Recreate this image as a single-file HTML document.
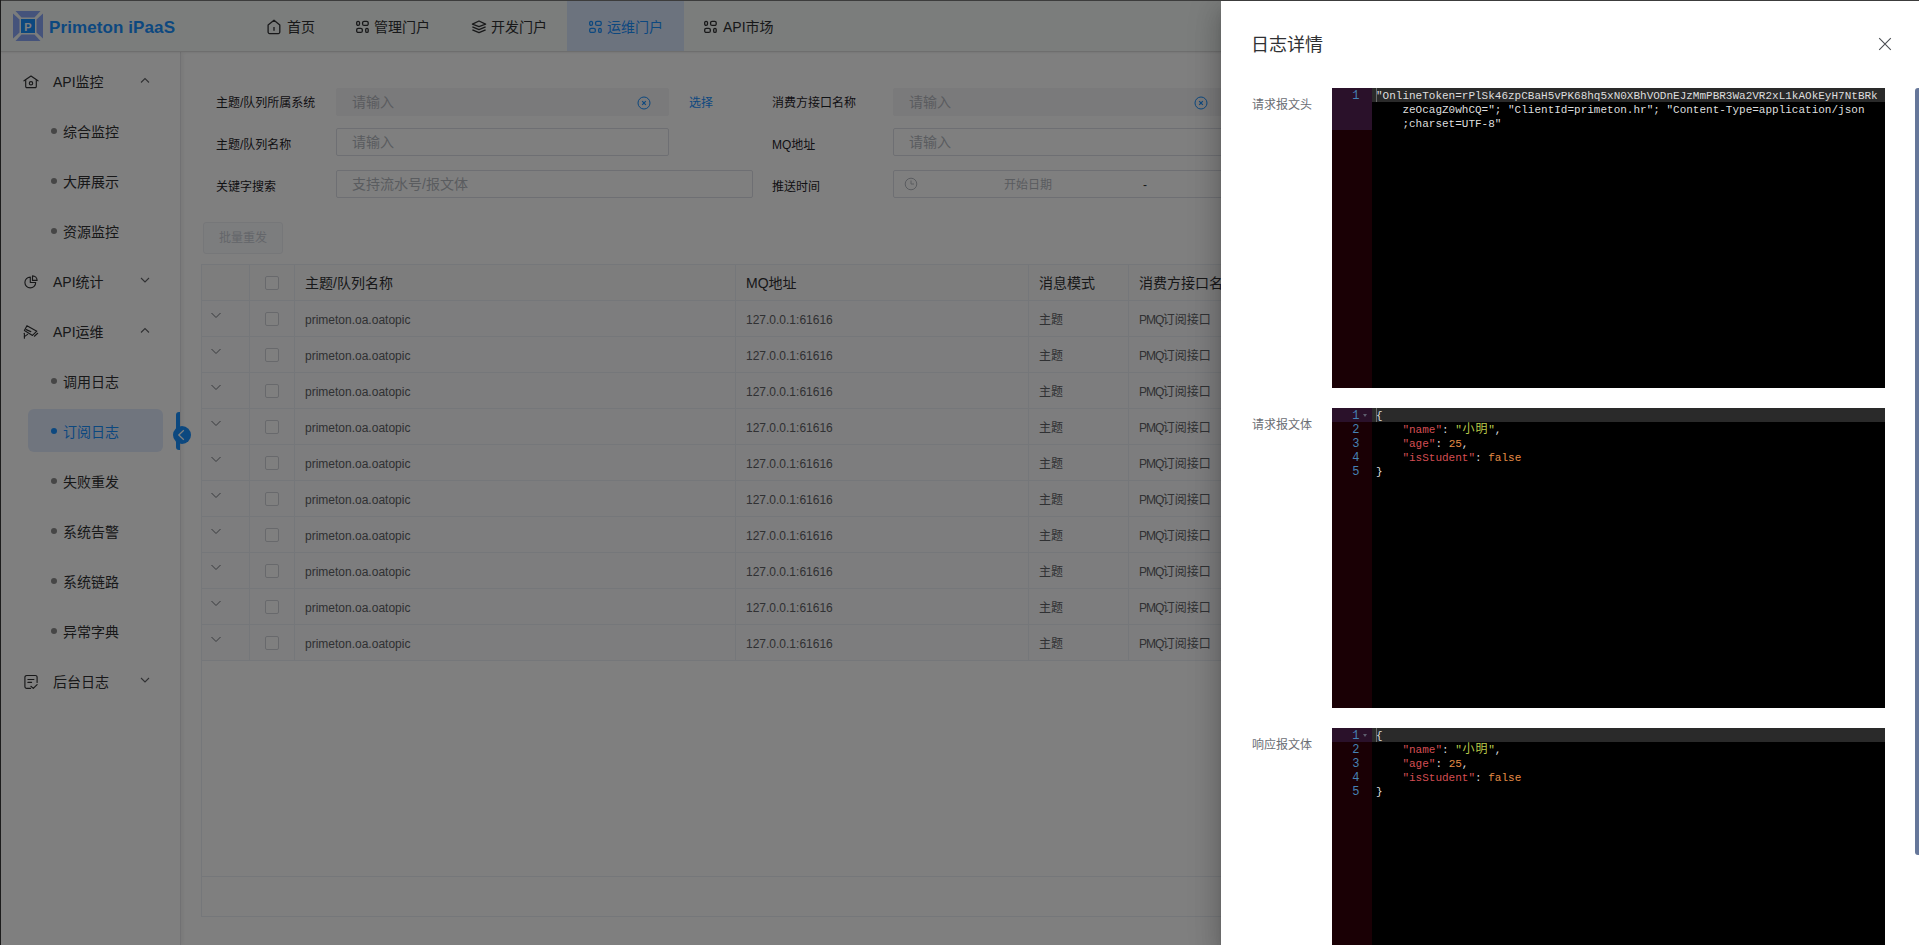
<!DOCTYPE html>
<html lang="zh-CN">
<head>
<meta charset="utf-8">
<title>Primeton iPaaS</title>
<style>
*{box-sizing:border-box;margin:0;padding:0}
html,body{width:1919px;height:945px;overflow:hidden;background:#fff}
body{font-family:"Liberation Sans","Noto Sans CJK SC",sans-serif;font-size:14px;color:#303133;position:relative}
.abs{position:absolute}
#app{position:absolute;left:0;top:0;width:1919px;height:945px;background:#fff;overflow:hidden;z-index:0}
/* header */
#hdr{position:absolute;left:0;top:0;width:1919px;height:52px;background:#f6faf8;border-bottom:1px solid #dcdcdc;box-shadow:0 1px 2px rgba(0,0,0,.07);z-index:2}
#logo-t{position:absolute;left:49px;top:16px;font-size:17px;font-weight:bold;color:#1890ff;line-height:24px;letter-spacing:.1px}
.nav{position:absolute;top:1px;height:50px;line-height:52px;font-size:14px;color:#303133;white-space:nowrap}
.nav svg{position:absolute;top:18px;left:0}
.nav.act{background:#d8e6fd;color:#1890ff}
/* sidebar */
#side{position:absolute;left:0;top:52px;width:181px;height:893px;background:#fff;border-right:1px solid #e3e3e6;box-shadow:2px 0 4px rgba(0,0,0,.06)}
.m1{position:absolute;margin-top:1px;left:53px;font-size:14px;color:#303133;line-height:20px;white-space:nowrap}
.m2{position:absolute;margin-top:1px;left:63px;font-size:14px;color:#303133;line-height:20px;white-space:nowrap}
.dot{position:absolute;margin-top:0;left:51px;width:6px;height:6px;border-radius:50%;background:#8c8c8c}
.arr{position:absolute;left:139px;margin-top:1px}
.ico{position:absolute;left:23px;margin-top:1px}
/* main */
.lbl{position:absolute;margin-top:1px;font-size:12px;color:#1f2329;line-height:18px;white-space:nowrap}
.inp{position:absolute;height:28px;border:1px solid #dcdfe6;border-radius:2px;background:#fff;font-size:14px;color:#b4b8bf;line-height:26px;padding-left:15px;white-space:nowrap}
.inp.dis{background:#f4f4f6;border-color:#f4f4f6}
table{border-collapse:collapse}
#tbl{position:absolute;left:201px;top:264px;width:1400px}
#tbl td,#tbl th{border:1px solid #ebeef5;height:36px;font-size:12px;color:#606266;text-align:left;padding:0 0 0 10px;white-space:nowrap;font-weight:normal;overflow:hidden}
#tbl th{font-size:14px;color:#303133;background:#fafafb;height:36px;padding-bottom:2px}
#tbl tr.r td{background:#fbfbfc}
.la{position:relative;top:1px}
.pq{letter-spacing:-1px;margin-right:-.5px}
.cb{display:inline-block;width:14px;height:14px;border:1px solid #d0d3d9;border-radius:2px;background:#fff;vertical-align:middle}
/* overlay + drawer */
#mask{position:absolute;left:0;top:0;width:1919px;height:945px;background:rgba(0,0,0,.5)}
#drawer{position:absolute;left:1221px;top:0;width:698px;height:945px;background:#fff;box-shadow:0 8px 10px -5px rgba(0,0,0,.2),0 16px 24px 2px rgba(0,0,0,.14),0 6px 30px 5px rgba(0,0,0,.12)}
#dtitle{position:absolute;left:30px;top:32px;font-size:18px;line-height:26px;color:#303133}
.dl{position:absolute;left:31px;font-size:12px;color:#6b6e74;line-height:18px;white-space:nowrap}
.ed{position:absolute;left:111px;width:553px;height:300px;background:#000;overflow:hidden;font-family:"Liberation Mono","Noto Sans CJK SC",monospace;font-size:11px;line-height:14px;color:#dedede}
.ed .g{position:absolute;left:0;top:0;width:40px;height:100%;background:#1a0005;color:steelblue}
.ed .ga{position:absolute;left:0;top:0;width:40px;background:#2a112a}
.ed .al{position:absolute;left:40px;top:0;right:0;height:14px;background:#2a2a2a}
.ed .ln{position:absolute;left:0;width:27.500px;text-align:right;height:14px;line-height:14px;color:steelblue;margin-top:.5px;font-size:12px}
.ed .t{position:absolute;left:44px;height:14px;line-height:14px;white-space:pre;margin-top:1px}
.cjk{display:inline-block;width:13.200px;text-align:center;font-size:12px}
.v{color:#d54e53}.s{color:#b9ca4a}.n{color:#e78c45}
#frame-l{position:absolute;left:0;top:0;width:1px;height:945px;background:#1c1c1c}
#frame-t{position:absolute;left:0;top:0;width:1919px;height:1px;background:#3c3c3c}
</style>
</head>
<body>
<div id="app">
<div id="hdr">
<svg class="abs" style="left:13px;top:11px;border-radius:2.500px" width="30" height="30" viewBox="0 0 30 30">
<polygon points="2.5,0 27.5,0 21.5,6.5 8.5,6.5" fill="#8aa6f6"/>
<polygon points="2.5,30 27.5,30 21.5,23.5 8.5,23.5" fill="#8aa6f6"/>
<polygon points="0,2.5 0,27.5 6.5,21.5 6.5,8.5" fill="#8aa6f6"/>
<polygon points="30,2.5 30,27.5 23.5,21.5 23.5,8.5" fill="#8aa6f6"/>
<rect x="8" y="8" width="14" height="14" fill="#1890ff"/>
<text x="15" y="19.5" font-family="Liberation Sans, sans-serif" font-weight="bold" font-size="11" fill="#fff" text-anchor="middle">P</text>
</svg>
<div id="logo-t">Primeton iPaaS</div>
<div class="nav" style="left:267px;padding-left:20px"><svg width="16" height="16" viewBox="0 0 16 16" fill="none" stroke="#303133" stroke-width="1.3"><path d="M1.100 6 7 1.250 12.800 6v7.100a1.500 1.500 0 0 1-1.500 1.500H2.600a1.500 1.500 0 0 1-1.500-1.500z" stroke-linejoin="round"/><path d="M7 8.100v3.600"/></svg>首页</div>
<div class="nav" style="left:355px;padding-left:19px"><svg width="16" height="16" viewBox="0 0 16 16" fill="none" stroke="#303133" stroke-width="1.3"><rect x="1.700" y="2.300" width="2.800" height="4.100" rx="1.300"/><rect x="7.600" y="2.300" width="5.600" height="4.100" rx="1.500"/><rect x="1.700" y="9.300" width="5.600" height="4.100" rx="1.500"/><rect x="10.700" y="9.300" width="2.500" height="4.100" rx="1.200"/></svg>管理门户</div>
<div class="nav" style="left:471px;padding-left:20px"><svg width="16" height="16" viewBox="0 0 16 16" fill="none" stroke="#303133" stroke-width="1.300" stroke-linejoin="round"><path d="M8 2 14.600 5.100 8 7.600 1.400 5.100z"/><path d="M1.400 7.900 8 10.600l6.600-2.700"/><path d="M1.400 10.800 8 13.600l6.600-2.800"/></svg>开发门户</div>
<div class="nav act" style="left:567px;width:117px;padding-left:40px"><svg style="left:21px" width="16" height="16" viewBox="0 0 16 16" fill="none" stroke="#1890ff" stroke-width="1.300"><rect x="1.700" y="2.300" width="2.800" height="4.100" rx="1.300"/><rect x="7.600" y="2.300" width="5.600" height="4.100" rx="1.500"/><rect x="1.700" y="9.300" width="5.600" height="4.100" rx="1.500"/><rect x="10.700" y="9.300" width="2.500" height="4.100" rx="1.200"/></svg>运维门户</div>
<div class="nav" style="left:703px;padding-left:20px"><svg width="16" height="16" viewBox="0 0 16 16" fill="none" stroke="#303133" stroke-width="1.300"><rect x="1.700" y="2.300" width="2.800" height="4.100" rx="1.300"/><rect x="7.600" y="2.300" width="5.600" height="4.100" rx="1.500"/><rect x="1.700" y="9.300" width="5.600" height="4.100" rx="1.500"/><rect x="10.700" y="9.300" width="2.500" height="4.100" rx="1.200"/></svg>API市场</div>
</div>
<div id="side">
<svg class="ico" style="top:21px" width="16" height="16" viewBox="0 0 16 16" fill="none" stroke="#303133" stroke-width="1.150" stroke-linejoin="round" stroke-linecap="round"><path d="M1 6.800 8 2l7 4.800"/><path d="M2.700 6.200v6.200a1.200 1.200 0 0 0 1.200 1.200h8.200a1.200 1.200 0 0 0 1.200-1.200V6.200"/><circle cx="8" cy="9.300" r="1.700"/></svg>
<div class="m1" style="top:19px">API监控</div>
<svg class="arr" style="top:22px" width="12" height="12" viewBox="0 0 12 12" fill="none" stroke="#606266" stroke-width="1.1"><path d="M2 7.500 6 3.500l4 4"/></svg>
<div class="dot" style="top:76px"></div>
<div class="m2" style="top:69px">综合监控</div>
<div class="dot" style="top:126px"></div>
<div class="m2" style="top:119px">大屏展示</div>
<div class="dot" style="top:176px"></div>
<div class="m2" style="top:169px">资源监控</div>
<svg class="ico" style="top:221px" width="16" height="16" viewBox="0 0 16 16" fill="none" stroke="#303133" stroke-width="1.150" stroke-linejoin="round" stroke-linecap="round"><path d="M7.300 8.500V3.100A5.400 5.400 0 1 0 12.700 8.500z"/><path d="M9.500 6.400V1.800A4.600 4.600 0 0 1 14.100 6.400z"/></svg>
<div class="m1" style="top:219px">API统计</div>
<svg class="arr" style="top:222px" width="12" height="12" viewBox="0 0 12 12" fill="none" stroke="#606266" stroke-width="1.1"><path d="M2 3 6 7l4-4"/></svg>
<svg class="ico" style="top:271px" width="16" height="16" viewBox="0 0 16 16" fill="none" stroke="#303133" stroke-width="1.150" stroke-linejoin="round" stroke-linecap="round"><path d="M3.950 1.700 13.800 7.200 9.500 11.400 1.400 6.500z"/><path d="M3.200 5.650 7.800 7.600"/><path d="M11.400 12.200 14.700 9.300"/><path d="M1.400 9.300v4.900"/><path d="M1.400 12.600 4.600 10.400"/></svg>
<div class="m1" style="top:269px">API运维</div>
<svg class="arr" style="top:272px" width="12" height="12" viewBox="0 0 12 12" fill="none" stroke="#606266" stroke-width="1.1"><path d="M2 7.500 6 3.500l4 4"/></svg>
<div class="dot" style="top:326px"></div>
<div class="m2" style="top:319px">调用日志</div>
<div class="abs" style="left:28px;top:357px;width:135px;height:43px;border-radius:6px;background:#e0eafd"></div>
<div class="dot" style="top:376px;background:#1890ff"></div>
<div class="m2" style="top:369px;color:#1890ff">订阅日志</div>
<div class="dot" style="top:426px"></div>
<div class="m2" style="top:419px">失败重发</div>
<div class="dot" style="top:476px"></div>
<div class="m2" style="top:469px">系统告警</div>
<div class="dot" style="top:526px"></div>
<div class="m2" style="top:519px">系统链路</div>
<div class="dot" style="top:576px"></div>
<div class="m2" style="top:569px">异常字典</div>
<svg class="ico" style="top:621px" width="16" height="16" viewBox="0 0 16 16" fill="none" stroke="#303133" stroke-width="1.150" stroke-linejoin="round" stroke-linecap="round"><path d="M14.100 8.500V3.300a1.800 1.800 0 0 0-1.800-1.800H3.700a1.800 1.800 0 0 0-1.800 1.800v9.300a1.800 1.800 0 0 0 1.800 1.800h3.900"/><path d="M4.900 5.500h6M4.900 8.400h3.700"/><path d="M7.900 12.300l2.400 2.100 3.800-3.800"/></svg>
<div class="m1" style="top:619px">后台日志</div>
<svg class="arr" style="top:622px" width="12" height="12" viewBox="0 0 12 12" fill="none" stroke="#606266" stroke-width="1.1"><path d="M2 3 6 7l4-4"/></svg>
</div>
<div class="abs" style="left:176px;top:412px;width:4px;height:38px;background:#1890ff;border-radius:3px 0 0 3px"></div>
<div class="abs" style="left:173px;top:426px;width:18px;height:18px;border-radius:50%;background:#1890ff"></div>
<svg class="abs" style="left:175px;top:429px" width="12" height="12" viewBox="0 0 12 12" fill="none" stroke="#fff" stroke-width="1.300"><path d="M8.800 1.300 3.800 6l5 4.700"/></svg>
<div class="lbl" style="left:216px;top:93px">主题/队列所属系统</div>
<div class="inp dis" style="left:336px;top:88px;width:333px">请输入</div>
<svg class="abs" style="left:637px;top:96px" width="14" height="14" viewBox="0 0 14 14" fill="none" stroke="#1890ff" stroke-width="1"><circle cx="7" cy="7" r="6"/><path d="M5.200 5.200l3.600 3.600M8.800 5.200 5.200 8.800" stroke-width="1.200"/></svg>
<div class="abs" style="left:689px;top:94px;font-size:12px;line-height:18px;color:#1890ff">选择</div>
<div class="lbl" style="left:772px;top:93px">消费方接口名称</div>
<div class="inp dis" style="left:893px;top:88px;width:333px">请输入</div>
<svg class="abs" style="left:1194px;top:96px" width="14" height="14" viewBox="0 0 14 14" fill="none" stroke="#1890ff" stroke-width="1"><circle cx="7" cy="7" r="6"/><path d="M5.200 5.200l3.600 3.600M8.800 5.200 5.200 8.800" stroke-width="1.200"/></svg>
<div class="lbl" style="left:216px;top:135px">主题/队列名称</div>
<div class="inp" style="left:336px;top:128px;width:333px">请输入</div>
<div class="lbl" style="left:772px;top:135px">MQ地址</div>
<div class="inp" style="left:893px;top:128px;width:333px">请输入</div>
<div class="lbl" style="left:216px;top:177px">关键字搜索</div>
<div class="inp" style="left:336px;top:170px;width:417px">支持流水号/报文体</div>
<div class="lbl" style="left:772px;top:177px">推送时间</div>
<div class="inp" style="left:893px;top:170px;width:417px;padding-left:0"><span class="abs" style="left:110px;top:1px;font-size:12px">开始日期</span><span class="abs" style="left:249px;top:1px;color:#303133;font-size:12px">-</span></div>
<svg class="abs" style="left:904px;top:177px" width="14" height="14" viewBox="0 0 14 14" fill="none" stroke="#b4b8bf" stroke-width="1"><circle cx="7" cy="7" r="5.800"/><path d="M7 3.500V7h3"/></svg>
<div class="abs" style="left:203px;top:222px;width:80px;height:32px;border-radius:3px;background:#f9fafc;border:1px solid #eceef3;color:#c8ccd4;font-size:12px;line-height:30px;text-align:center">批量重发</div>
<div class="abs" style="left:201px;top:264px;width:1400px;height:613px;border:1px solid #ebeef5"></div>
<div class="abs" style="left:201px;top:876px;width:1400px;height:41px;border:1px solid #ebeef5"></div>
<table id="tbl"><tr><th style="width:48px"></th><th style="width:45px;padding-left:15px"><span class="cb"></span></th><th style="width:441px">主题/队列名称</th><th style="width:293px">MQ地址</th><th style="width:100px">消息模式</th><th>消费方接口名称</th></tr>
<tr class="r"><td><svg width="12" height="12" viewBox="0 0 12 12" fill="none" stroke="#72757c" stroke-width="1" style="position:relative;top:-2px;left:-2.500px"><path d="M1.500 4 6 8.500l4.500-4.500"/></svg></td><td style="padding-left:15px"><span class="cb"></span></td><td><span class="la">primeton.oa.oatopic</span></td><td><span class="la">127.0.0.1:61616</span></td><td>主题</td><td><span class="pq">PMQ</span>订阅接口</td></tr>
<tr class="r"><td><svg width="12" height="12" viewBox="0 0 12 12" fill="none" stroke="#72757c" stroke-width="1" style="position:relative;top:-2px;left:-2.500px"><path d="M1.500 4 6 8.500l4.500-4.500"/></svg></td><td style="padding-left:15px"><span class="cb"></span></td><td><span class="la">primeton.oa.oatopic</span></td><td><span class="la">127.0.0.1:61616</span></td><td>主题</td><td><span class="pq">PMQ</span>订阅接口</td></tr>
<tr class="r"><td><svg width="12" height="12" viewBox="0 0 12 12" fill="none" stroke="#72757c" stroke-width="1" style="position:relative;top:-2px;left:-2.500px"><path d="M1.500 4 6 8.500l4.500-4.500"/></svg></td><td style="padding-left:15px"><span class="cb"></span></td><td><span class="la">primeton.oa.oatopic</span></td><td><span class="la">127.0.0.1:61616</span></td><td>主题</td><td><span class="pq">PMQ</span>订阅接口</td></tr>
<tr class="r"><td><svg width="12" height="12" viewBox="0 0 12 12" fill="none" stroke="#72757c" stroke-width="1" style="position:relative;top:-2px;left:-2.500px"><path d="M1.500 4 6 8.500l4.500-4.500"/></svg></td><td style="padding-left:15px"><span class="cb"></span></td><td><span class="la">primeton.oa.oatopic</span></td><td><span class="la">127.0.0.1:61616</span></td><td>主题</td><td><span class="pq">PMQ</span>订阅接口</td></tr>
<tr class="r"><td><svg width="12" height="12" viewBox="0 0 12 12" fill="none" stroke="#72757c" stroke-width="1" style="position:relative;top:-2px;left:-2.500px"><path d="M1.500 4 6 8.500l4.500-4.500"/></svg></td><td style="padding-left:15px"><span class="cb"></span></td><td><span class="la">primeton.oa.oatopic</span></td><td><span class="la">127.0.0.1:61616</span></td><td>主题</td><td><span class="pq">PMQ</span>订阅接口</td></tr>
<tr class="r"><td><svg width="12" height="12" viewBox="0 0 12 12" fill="none" stroke="#72757c" stroke-width="1" style="position:relative;top:-2px;left:-2.500px"><path d="M1.500 4 6 8.500l4.500-4.500"/></svg></td><td style="padding-left:15px"><span class="cb"></span></td><td><span class="la">primeton.oa.oatopic</span></td><td><span class="la">127.0.0.1:61616</span></td><td>主题</td><td><span class="pq">PMQ</span>订阅接口</td></tr>
<tr class="r"><td><svg width="12" height="12" viewBox="0 0 12 12" fill="none" stroke="#72757c" stroke-width="1" style="position:relative;top:-2px;left:-2.500px"><path d="M1.500 4 6 8.500l4.500-4.500"/></svg></td><td style="padding-left:15px"><span class="cb"></span></td><td><span class="la">primeton.oa.oatopic</span></td><td><span class="la">127.0.0.1:61616</span></td><td>主题</td><td><span class="pq">PMQ</span>订阅接口</td></tr>
<tr class="r"><td><svg width="12" height="12" viewBox="0 0 12 12" fill="none" stroke="#72757c" stroke-width="1" style="position:relative;top:-2px;left:-2.500px"><path d="M1.500 4 6 8.500l4.500-4.500"/></svg></td><td style="padding-left:15px"><span class="cb"></span></td><td><span class="la">primeton.oa.oatopic</span></td><td><span class="la">127.0.0.1:61616</span></td><td>主题</td><td><span class="pq">PMQ</span>订阅接口</td></tr>
<tr class="r"><td><svg width="12" height="12" viewBox="0 0 12 12" fill="none" stroke="#72757c" stroke-width="1" style="position:relative;top:-2px;left:-2.500px"><path d="M1.500 4 6 8.500l4.500-4.500"/></svg></td><td style="padding-left:15px"><span class="cb"></span></td><td><span class="la">primeton.oa.oatopic</span></td><td><span class="la">127.0.0.1:61616</span></td><td>主题</td><td><span class="pq">PMQ</span>订阅接口</td></tr>
<tr class="r"><td><svg width="12" height="12" viewBox="0 0 12 12" fill="none" stroke="#72757c" stroke-width="1" style="position:relative;top:-2px;left:-2.500px"><path d="M1.500 4 6 8.500l4.500-4.500"/></svg></td><td style="padding-left:15px"><span class="cb"></span></td><td><span class="la">primeton.oa.oatopic</span></td><td><span class="la">127.0.0.1:61616</span></td><td>主题</td><td><span class="pq">PMQ</span>订阅接口</td></tr></table>
</div>
<div id="mask"></div>
<div id="drawer">
<div id="dtitle">日志详情</div>
<svg class="abs" style="left:657px;top:37px" width="14" height="14" viewBox="0 0 14 14" fill="none" stroke="#4a4d52" stroke-width="1.100"><path d="M1.200 1.200 12.800 12.800M12.800 1.200 1.200 12.800"/></svg>
<div class="dl" style="top:96px">请求报文头</div>
<div class="ed" style="top:88px"><div class="g"></div><div class="ga" style="height:42px"></div><div class="al"></div><div class="abs" style="left:44px;top:0;width:1px;height:14px;background:#6a6a6a"></div><div class="ln" style="top:0">1</div><div class="t" style="top:0">"OnlineToken=rPlSk46zpCBaH5vPK68hq5xN0XBhVODnEJzMmPBR3Wa2VR2xL1kAOkEyH7NtBRk</div><div class="t" style="top:14px">    zeOcagZ0whCQ="; "ClientId=primeton.hr"; "Content-Type=application/json</div><div class="t" style="top:28px">    ;charset=UTF-8"</div></div>
<div class="dl" style="top:416px">请求报文体</div>
<div class="ed" style="top:408px"><div class="g"></div><div class="ga" style="height:14px"></div><div class="al"></div><div class="abs" style="left:44px;top:0;width:1px;height:14px;background:#6a6a6a"></div><div class="ln" style="top:0">1</div><div class="ln" style="top:14px">2</div><div class="ln" style="top:28px">3</div><div class="ln" style="top:42px">4</div><div class="ln" style="top:56px">5</div><div class="abs" style="left:31px;top:6px;width:0;height:0;border-left:2.500px solid transparent;border-right:2.500px solid transparent;border-top:3.500px solid #5c5c6c"></div><div class="t" style="top:0">{</div><div class="t" style="top:14px">    <span class="v">"name"</span>: <span class="s">"<span class="cjk">小</span><span class="cjk">明</span>"</span>,</div><div class="t" style="top:28px">    <span class="v">"age"</span>: <span class="n">25</span>,</div><div class="t" style="top:42px">    <span class="v">"isStudent"</span>: <span class="n">false</span></div><div class="t" style="top:56px">}</div></div>
<div class="dl" style="top:736px">响应报文体</div>
<div class="ed" style="top:728px"><div class="g"></div><div class="ga" style="height:14px"></div><div class="al"></div><div class="abs" style="left:44px;top:0;width:1px;height:14px;background:#6a6a6a"></div><div class="ln" style="top:0">1</div><div class="ln" style="top:14px">2</div><div class="ln" style="top:28px">3</div><div class="ln" style="top:42px">4</div><div class="ln" style="top:56px">5</div><div class="abs" style="left:31px;top:6px;width:0;height:0;border-left:2.500px solid transparent;border-right:2.500px solid transparent;border-top:3.500px solid #5c5c6c"></div><div class="t" style="top:0">{</div><div class="t" style="top:14px">    <span class="v">"name"</span>: <span class="s">"<span class="cjk">小</span><span class="cjk">明</span>"</span>,</div><div class="t" style="top:28px">    <span class="v">"age"</span>: <span class="n">25</span>,</div><div class="t" style="top:42px">    <span class="v">"isStudent"</span>: <span class="n">false</span></div><div class="t" style="top:56px">}</div></div>
<div class="abs" style="left:694px;top:88px;width:6px;height:767px;border-radius:3px;background:#66779a"></div>
</div>
<div id="frame-t"></div><div id="frame-l"></div>
</body>
</html>
